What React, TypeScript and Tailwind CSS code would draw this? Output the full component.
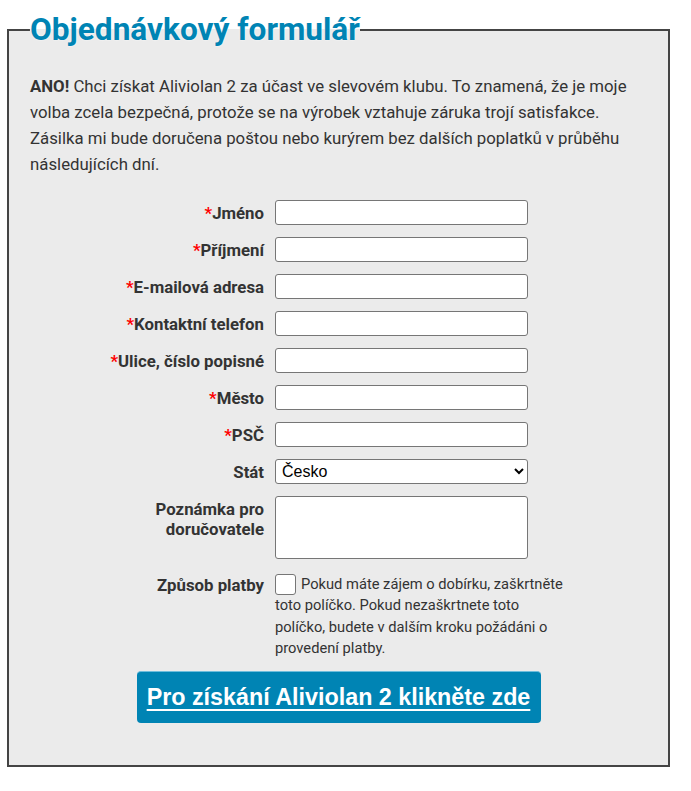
import React from 'react'

type Field = {
  label: string
  required?: boolean
}

const fields: Field[] = [
  { label: 'Jméno', required: true },
  { label: 'Příjmení', required: true },
  { label: 'E-mailová adresa', required: true },
  { label: 'Kontaktní telefon', required: true },
  { label: 'Ulice, číslo popisné', required: true },
  { label: 'Město', required: true },
  { label: 'PSČ', required: true },
]

function FieldLabel({ label, required }: Field) {
  return (
    <label className="self-center text-right text-[16.8px] font-bold leading-[20px] text-[#333]">
      {required && <span className="text-[#ff0000]">*</span>}
      {label}
    </label>
  )
}

export default function App() {
  return (
    <div className="min-h-[791px] bg-white pt-[12px] font-['Roboto',sans-serif]">
      <fieldset className="ml-[7px] w-[663px] border-2 border-[#444] bg-[#ebebeb] px-[21px] pb-[42px]">
        <legend className="text-[31.6px] font-bold leading-[36px] text-[#0084b4] [text-shadow:0_0_2px_#fff]">
          Objednávkový formulář
        </legend>

        <p className="mt-[25px] text-[16.8px] leading-[26px] text-[#333]">
          <b>ANO!</b> Chci získat Aliviolan 2 za účast ve slevovém klubu. To znamená, že je moje volba
          zcela bezpečná, protože se na výrobek vztahuje záruka trojí satisfakce. Zásilka mi bude
          doručena poštou nebo kurýrem bez dalších poplatků v průběhu následujících dní.
        </p>

        <form className="mt-[23px] ml-[64px] grid grid-cols-[170px_253px] gap-x-[11px] gap-y-[12px]">
          {fields.map((f) => (
            <React.Fragment key={f.label}>
              <FieldLabel {...f} />
              <input
                type="text"
                className="h-[25px] w-[253px] rounded-[3px] border border-[#767676] bg-white px-[4px] text-[16px]"
              />
            </React.Fragment>
          ))}

          <FieldLabel label="Stát" />
          <select
            defaultValue="cz"
            className="h-[25px] w-[253px] rounded-[3px] border border-[#767676] bg-white pl-[2px] font-['Liberation_Sans',Arial,sans-serif] text-[16px] text-black"
          >
            <option value="cz">Česko</option>
            <option value="sk">Slovensko</option>
          </select>

          <label className="self-start pt-[3px] text-right text-[16.8px] font-bold leading-[20px] text-[#333]">
            Poznámka pro doručovatele
          </label>
          <textarea className="h-[63px] w-[253px] resize-none rounded-[3px] border border-[#767676] bg-white" />

          <label className="mt-[3px] self-start pt-[1px] text-right text-[16.8px] font-bold leading-[20px] text-[#333]">
            Způsob platby
          </label>
          <div className="mt-[3px] w-[296px] text-[14.7px] leading-[21.3px] text-[#333]">
            <input
              type="checkbox"
              className="mr-[5px] inline-block h-[21px] w-[21px] appearance-none rounded-[3px] border border-[#767676] bg-white align-top"
            />
            Pokud máte zájem o dobírku, zaškrtněte toto políčko. Pokud nezaškrtnete toto políčko,
            budete v dalším kroku požádáni o provedení platby.
          </div>
        </form>

        <div className="mt-[12px] flex justify-center">
          <button
            type="button"
            className="flex h-[52px] w-[404px] items-center justify-center rounded-[4px] border-t border-[#6fbddc] bg-[#0084b4] font-['Liberation_Sans',Arial,sans-serif] text-[23.3px] font-bold text-white underline decoration-[2px] underline-offset-[4px]"
          >
            Pro získání Aliviolan 2 klikněte zde
          </button>
        </div>
      </fieldset>
    </div>
  )
}
